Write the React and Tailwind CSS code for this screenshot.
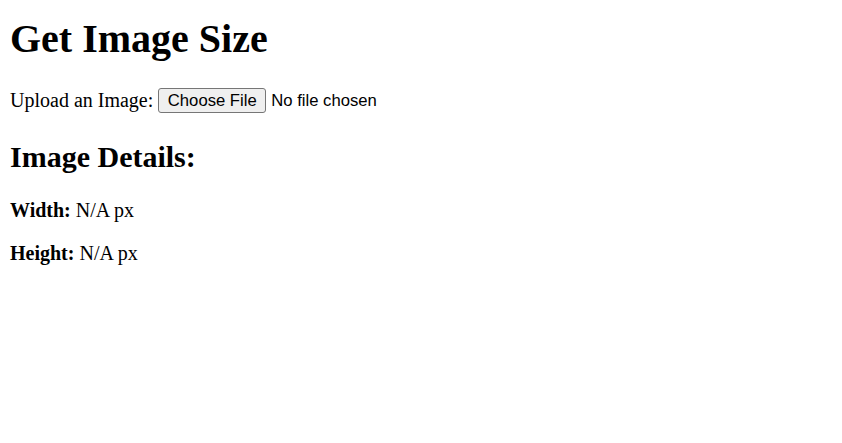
export default function App() {
  return (
    <div className="min-h-screen bg-white text-black px-[10px] pt-[15.5px] font-['Liberation_Serif',serif]">
      <h1 className="text-[40px] font-bold leading-[46px] mb-[26.5px]">Get Image Size</h1>

      <div className="flex items-center h-[25px]">
        <span className="text-[20px] leading-[23px]">Upload an Image:</span>
        <span className="ml-[5px] h-[25px] w-[108px] flex items-center justify-center border border-[#767676] rounded-[3px] bg-[#efefef] font-['Liberation_Sans',Arial,sans-serif] text-[16.67px] leading-[19px]">
          Choose File
        </span>
        <span className="ml-[5px] font-['Liberation_Sans',Arial,sans-serif] text-[16.67px] leading-[19px]">
          No file chosen
        </span>
      </div>

      <h2 className="mt-[26.6px] text-[30px] font-bold leading-[34.5px]">Image Details:</h2>
      <p className="mt-[25px] text-[20px] leading-[23px]">
        <strong>Width:</strong> N/A px
      </p>
      <p className="mt-[20px] text-[20px] leading-[23px]">
        <strong>Height:</strong> N/A px
      </p>
    </div>
  );
}
